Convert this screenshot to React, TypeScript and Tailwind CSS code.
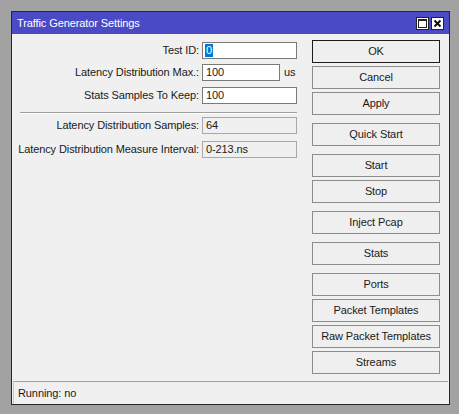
import React from "react";

const font = { fontFamily: '"Liberation Sans", Arial, sans-serif' };
const txt = "text-[11px] tracking-[-0.1px] text-[#1a1a1a]";

function Btn({ label, def, mt }: { label: string; def?: boolean; mt: string }) {
  return (
    <div
      className={`${mt} h-[23px] w-[128px] flex items-center justify-center ${txt} bg-[#efefef] border ${
        def ? "border-[#1c1c1c]" : "border-[#8c8c8c]"
      }`}
    >
      {label}
    </div>
  );
}

function Row({ label, children, mt }: { label: string; children: React.ReactNode; mt: string }) {
  return (
    <div className={`${mt} flex items-center h-[17px]`}>
      <div className={`w-[190px] text-right pr-[3px] whitespace-nowrap ${txt}`}>{label}</div>
      {children}
    </div>
  );
}

export default function App() {
  return (
    <div className="w-[459px] h-[414px] bg-[#a2a2a2] pl-[11px] pt-[11px]" style={font}>
      <div className="w-[439px] h-[394px] border border-[#262626] flex flex-col bg-[#f0f0f0]">
        <div className="h-[22px] bg-[#4a4ac6] flex items-center pl-[5px] pr-[5px]">
          <span className="text-white text-[11px] tracking-[-0.1px] flex-1">Traffic Generator Settings</span>
          <div className="w-[13px] h-[13px] bg-white border border-[#222] flex items-center justify-center">
            <div className="w-[9px] h-[9px] border border-[#222] border-t-2" />
          </div>
          <div className="ml-[2px] w-[13px] h-[13px] bg-white border border-[#222] flex items-center justify-center">
            <svg width="9" height="9" viewBox="0 0 9 9">
              <path d="M1.5 1.5 L7.5 7.5 M7.5 1.5 L1.5 7.5" stroke="#111" strokeWidth="2" />
            </svg>
          </div>
        </div>
        <div className="flex-1 flex flex-col">
          <div className="flex-1 flex">
            <div className="w-[300px]">
              <Row label="Test ID:" mt="mt-[8px]">
                <div className={`w-[95px] h-[17px] bg-white border border-[#7a7a7a] flex items-center pl-[2px] ${txt}`}>
                  <span className="bg-[#0078d7] text-white leading-[13px] px-[1px]">0</span>
                </div>
              </Row>
              <Row label="Latency Distribution Max.:" mt="mt-[5px]">
                <div className={`w-[78px] h-[17px] bg-white border border-[#7a7a7a] flex items-center pl-[3px] ${txt}`}>100</div>
                <span className={`ml-[4px] ${txt}`}>us</span>
              </Row>
              <Row label="Stats Samples To Keep:" mt="mt-[6px]">
                <div className={`w-[95px] h-[17px] bg-white border border-[#7a7a7a] flex items-center pl-[3px] ${txt}`}>100</div>
              </Row>
              <div className="mt-[8px] ml-[8px] w-[277px] h-[2px] border-t border-[#a0a0a0] border-b border-b-white" />
              <Row label="Latency Distribution Samples:" mt="mt-[3px]">
                <div className={`w-[95px] h-[17px] bg-[#f0f0f0] border border-[#a8a8a8] flex items-center pl-[3px] ${txt}`}>64</div>
              </Row>
              <Row label="Latency Distribution Measure Interval:" mt="mt-[7px]">
                <div className={`w-[95px] h-[17px] bg-[#f0f0f0] border border-[#a8a8a8] flex items-center pl-[3px] ${txt}`}>0-213.ns</div>
              </Row>
            </div>
            <div className="flex flex-col pt-[6px]">
              <Btn label="OK" def mt="mt-0" />
              <Btn label="Cancel" mt="mt-[3px]" />
              <Btn label="Apply" mt="mt-[3px]" />
              <Btn label="Quick Start" mt="mt-[8px]" />
              <Btn label="Start" mt="mt-[8px]" />
              <Btn label="Stop" mt="mt-[3px]" />
              <Btn label="Inject Pcap" mt="mt-[8px]" />
              <Btn label="Stats" mt="mt-[8px]" />
              <Btn label="Ports" mt="mt-[8px]" />
              <Btn label="Packet Templates" mt="mt-[3px]" />
              <Btn label="Raw Packet Templates" mt="mt-[3px]" />
              <Btn label="Streams" mt="mt-[3px]" />
            </div>
          </div>
          <div className={`h-[23px] mx-[1px] border-t border-[#a0a0a0] border-l border-l-[#c8c8c8] flex items-center pl-[4px] ${txt}`}>
            Running: no
          </div>
        </div>
      </div>
    </div>
  );
}
